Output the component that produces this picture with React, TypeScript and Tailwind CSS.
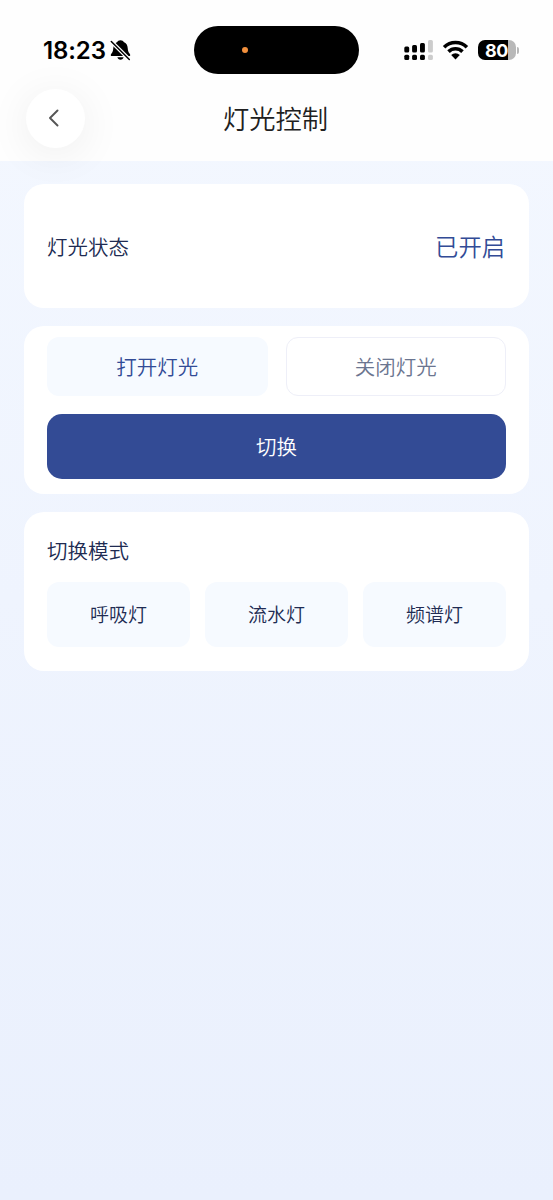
import { useState } from "react";

import clsx from "clsx";

const modes = ["呼吸灯", "流水灯", "频谱灯"];

function BellOffIcon() {
  return (
    <svg className="ml-[4px] h-[22px] w-[22px]" viewBox="0 0 22 22">
      <path
        d="M10.5 1.2c1.7 0 2.800.7 3.200 1.900 2.600 1 3.800 3.100 4 5.900.2 3.200.8 4.400 2 5.700 1 1.200.6 2.400-.8 2.400H2.100c-1.400 0-1.800-1.200-.8-2.400 1.200-1.300 1.800-2.500 2-5.700.2-2.800 1.400-4.900 4-5.900.4-1.200 1.500-1.900 3.200-1.900Z"
        fill="black"
      />
      <path d="M7.400 18.200h6.200c-.3 1.600-1.500 2.500-3.100 2.500s-2.800-.9-3.100-2.500Z" fill="black" />
      <path d="M1 2.200 20 21.200" stroke="white" strokeWidth="3.800" />
      <path d="M1.300 2.500 19.300 20.500" stroke="black" strokeWidth="1.500" strokeLinecap="round" />
    </svg>
  );
}

function SignalIcon() {
  return (
    <svg className="h-5 w-[29px]" viewBox="0 0 29 20">
      <rect x="0.3" y="6.5" width="4.9" height="6" rx="1.5" fill="black" />
      <rect x="8.1" y="5" width="4.9" height="7.5" rx="1.5" fill="black" />
      <rect x="16" y="3" width="4.9" height="9.5" rx="1.5" fill="black" />
      <rect x="24" y="0" width="4.9" height="12.5" rx="1.5" fill="#cccccc" />
      <rect x="0.3" y="14.7" width="4.9" height="5.3" rx="1.5" fill="black" />
      <rect x="8.1" y="14.7" width="4.9" height="5.3" rx="1.5" fill="black" />
      <rect x="16" y="14.7" width="4.9" height="5.3" rx="1.5" fill="black" />
      <rect x="24" y="14.7" width="4.9" height="5.3" rx="1.5" fill="#cccccc" />
    </svg>
  );
}

function WifiIcon() {
  return (
    <svg className="ml-[9px] h-5 w-[27px]" viewBox="0 0 27 20">
      <g fill="none" stroke="black" strokeWidth="3.6">
        <path d="M2.1 7.2a16.2 16.2 0 0 1 22.8 0" />
        <path d="M6.5 11.6a10 10 0 0 1 14 0" />
      </g>
      <path d="M9.2 15.1a6.2 6.2 0 0 1 8.6 0L13.500 19.500Z" fill="black" />
    </svg>
  );
}

function StatusBar() {
  return (
    <div className="flex h-[74px] items-start pt-[26px] font-['Inter','Liberation_Sans',sans-serif]">
      <div className="flex h-12 w-[194px] items-center pl-[43px]">
        <span className="w-[63px] pt-[2px] text-[24px] font-semibold tracking-[-0.1px] whitespace-nowrap">
          18:23
        </span>
        <BellOffIcon />
      </div>

      <div className="h-[48px] w-[165px] rounded-full bg-black pt-[21px] pl-[48px]">
        <div className="size-[6px] rounded-full bg-[#f2903d]" />
      </div>

      <div className="flex h-12 flex-1 items-center pl-[45px]">
        <SignalIcon />
        <WifiIcon />
        <div className="ml-[9px] flex h-5 w-[38px] items-center rounded-[7px] bg-linear-to-r from-black from-[79%] to-[#b8b8b8] to-[79%] pl-[7px] text-[18px] font-bold tracking-[-0.4px] text-white">
          80
        </div>
        <div className="ml-px h-[7px] w-[2px] rounded-r-full bg-[#b8b8b8]" />
      </div>
    </div>
  );
}

export default function App() {
  const [isOn, setIsOn] = useState(true);
  const [, setMode] = useState(modes[0]);

  return (
    <div className="min-h-[1200px] bg-linear-to-b from-[#f4f8ff] to-[#eaf0fd] font-['Noto_Sans_CJK_SC',sans-serif] font-[350] text-[#202b52]">
      {/* Header */}
      <header className="h-[161px] bg-[#fefefe] text-black">
        <StatusBar />

        <div className="flex h-[88px] items-center pr-[26px] pl-[26px]">
          <button
            aria-label="返回"
            className="relative flex size-[59px] items-center justify-center rounded-full bg-white shadow-[0_6px_44px_rgba(0,0,0,0.07)]"
          >
            <svg className="mr-[3px] h-[18px] w-[10px]" viewBox="0 0 10 18" fill="none">
              <path
                d="M8.5 1.5 1 9l7.5 7.5"
                stroke="#555555"
                strokeWidth="1.9"
                strokeLinecap="round"
                strokeLinejoin="round"
              />
            </svg>
          </button>
          <h1 className="flex-1 text-center text-[26.3px] font-[350] text-[#202020]">灯光控制</h1>
          <div className="w-[61px]" />
        </div>
      </header>

      <main className="flex flex-col gap-[18px] px-6 pt-[23px]">
        {/* Current state */}
        <section className="flex h-[124px] items-center justify-between rounded-[20px] bg-white px-[23px]">
          <span className="text-[20.5px]">灯光状态</span>
          <span className="mr-px text-[23.3px] text-[#324b96]">{isOn ? "已开启" : "已关闭"}</span>
        </section>

        {/* Switch */}
        <section className="h-[168px] rounded-[20px] bg-white px-[23px] pt-[11px] text-[20.5px]">
          <div className="grid grid-cols-2 gap-[18px]">
            {[true, false].map((value) => (
              <button
                key={String(value)}
                onClick={() => setIsOn(value)}
                className={clsx(
                  "h-[59px] rounded-[12px]",
                  isOn === value
                    ? "bg-[#f6faff] text-[#324b96]"
                    : "border border-[#eeeff8] bg-white text-[#6b7590]"
                )}
              >
                {value ? "打开灯光" : "关闭灯光"}
              </button>
            ))}
          </div>

          <button
            onClick={() => setIsOn(!isOn)}
            className="mt-[18px] h-[65px] w-full rounded-[15px] bg-[#334b95] text-white"
          >
            切换
          </button>
        </section>

        {/* Modes */}
        <section className="h-[159px] rounded-[20px] bg-white px-[23px] pt-[23px]">
          <h2 className="text-[20.5px] leading-[30px] font-[350]">切换模式</h2>

          <div className="mt-[17px] grid grid-cols-3 gap-[15px]">
            {modes.map((item) => (
              <button
                key={item}
                onClick={() => setMode(item)}
                className="h-[65px] rounded-[12px] bg-[#f6faff] text-[19px]"
              >
                {item}
              </button>
            ))}
          </div>
        </section>
      </main>
    </div>
  );
}
